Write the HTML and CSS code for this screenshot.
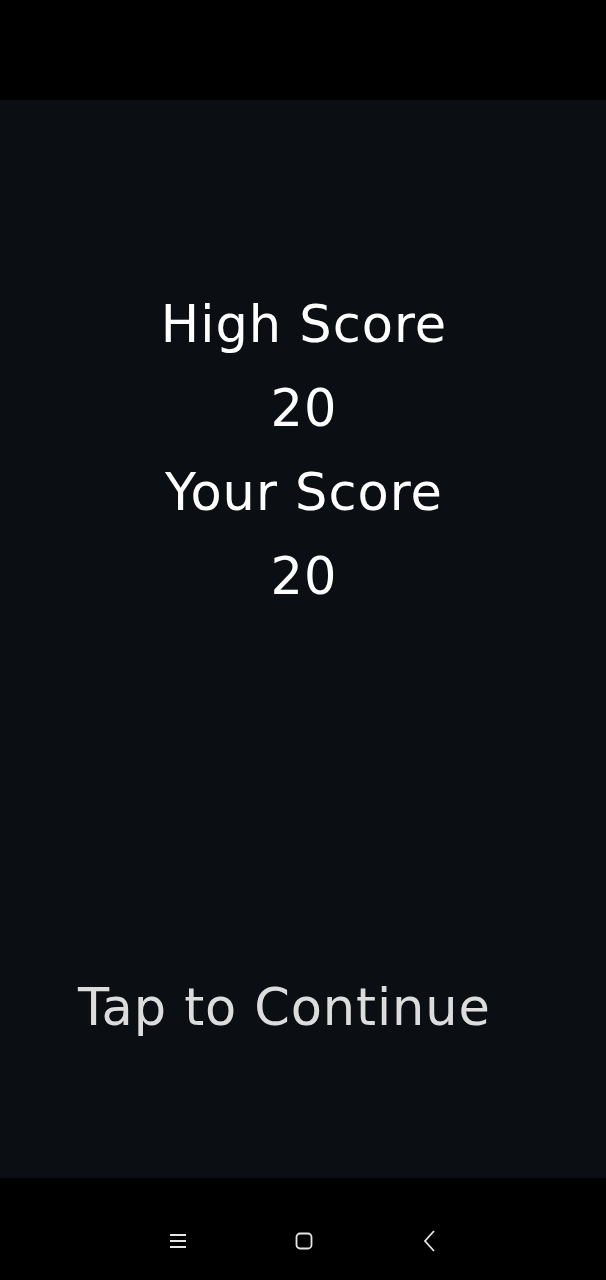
FILE: index.html
```html
<!DOCTYPE html>
<html lang="en">
<head>
    <meta charset="UTF-8">
    <meta name="viewport" content="width=device-width, initial-scale=1.0">
    <title>Game Over</title>
    <link rel="stylesheet" href="styles.css">
</head>
<body>
    <div class="status-bar"></div>

    <main class="game-over">
        <div class="scores">
            <div class="label">High Score</div>
            <div class="value">20</div>
            <div class="label">Your Score</div>
            <div class="value">20</div>
        </div>
        <div class="tap">Tap to Continue</div>
    </main>

    <nav class="nav-bar">
        <svg class="nav-icon" width="20" height="20" viewBox="0 0 20 20">
            <path d="M2 4h16M2 10h16M2 16h16" stroke="#e6e6e6" stroke-width="1.8" fill="none"/>
        </svg>
        <svg class="nav-icon" width="20" height="20" viewBox="0 0 20 20">
            <rect x="2.5" y="2.5" width="15" height="15" rx="3.5" stroke="#e6e6e6" stroke-width="1.8" fill="none"/>
        </svg>
        <svg class="nav-icon" width="20" height="24" viewBox="0 0 20 24">
            <path d="M14 2L5 12l9 10" stroke="#e6e6e6" stroke-width="1.8" fill="none"/>
        </svg>
    </nav>
</body>
</html>
```

FILE: styles.css
```css
body {
    margin: 0;
    background-color: #000;
    font-family: "DejaVu Sans", Verdana, sans-serif;
}
.status-bar {
    height: 100px;
    background-color: #000;
}
.game-over {
    height: 1078px;
    box-sizing: border-box;
    padding-top: 183px;
    background-color: #0b0f13;
}
.scores {
    text-align: center;
    color: #fff;
    font-size: 51px;
    line-height: 84px;
    letter-spacing: 1px;
}
.scores .label,
.scores .value {
    margin-left: 2px;
}
.tap {
    margin-top: 347px;
    padding-left: 78px;
    color: #dcdcdc;
    font-size: 51px;
    line-height: 84px;
    letter-spacing: 0.9px;
}
.nav-bar {
    height: 102px;
    box-sizing: border-box;
    padding: 24px 0 0 2px;
    display: flex;
    justify-content: center;
    align-items: center;
    gap: 106px;
    background-color: #000;
}
```
